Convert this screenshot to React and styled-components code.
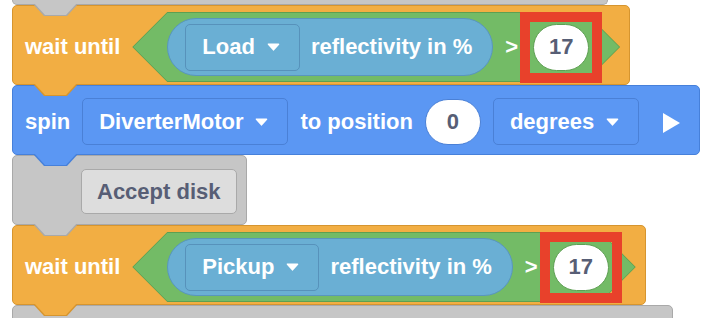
import React from "react";
import styled, { createGlobalStyle } from "styled-components";

const GlobalStyle = createGlobalStyle`
  html, body {
    margin: 0;
    background: #ffffff;
    overflow: hidden;
  }
  body {
    font-family: "Liberation Sans", Arial, sans-serif;
  }
`;

// block colours
const palette = {
  control: { fill: "#f2ae43", line: "#d6952f" },
  motion: { fill: "#5b97f3", line: "#4680da" },
  note: { fill: "#c6c6c6", line: "#a9a9a9" },
};

const Canvas = styled.div`
  display: flex;
  flex-direction: column;
  align-items: flex-start;
  padding-left: 12px;
  height: 318px;
  overflow: hidden;
`;

const Block = styled.div`
  position: relative;
  flex-shrink: 0;
  display: flex;
  align-items: center;
  gap: 12px;
  box-sizing: border-box;
  height: ${(p) => p.$h}px;
  width: ${(p) => (p.$w ? `${p.$w}px` : "auto")};
  padding: ${(p) => p.$pt ?? 3}px ${(p) => p.$pr ?? 19}px 0 ${(p) => p.$pl ?? 12}px;
  background: ${(p) => palette[p.$kind].fill};
  border: 1px solid ${(p) => palette[p.$kind].line};
  border-radius: ${(p) => (p.$stub ? "0 0 5px 5px" : "5px")};
  border-top-width: ${(p) => (p.$stub ? 0 : 1)}px;

  /* connector tab that pokes into the next block */
  &::before,
  &::after {
    content: "";
    position: absolute;
    z-index: 3;
    height: 12px;
    clip-path: polygon(0 0, 100% 0, calc(100% - 11px) 100%, 11px 100%);
  }
  &::before {
    left: 20px;
    top: 100%;
    width: 45px;
    background: ${(p) => palette[p.$kind].line};
  }
  &::after {
    left: 21px;
    top: calc(100% - 1px);
    width: 43px;
    background: ${(p) => palette[p.$kind].fill};
  }
`;

const Label = styled.span`
  color: ${(p) => (p.$dark ? "#575e75" : "#ffffff")};
  font-size: 22px;
  font-weight: 700;
  line-height: 1;
  white-space: nowrap;
`;

const Hex = styled.div`
  position: relative;
  display: flex;
  align-items: center;
  gap: 12px;
  box-sizing: border-box;
  height: 70px;
  padding: 0 ${(p) => p.$pr}px 0 35px;

  &::before,
  &::after {
    content: "";
    position: absolute;
  }
  &::before {
    inset: 0;
    background: #5d9f52;
    clip-path: polygon(35px 0, calc(100% - 35px) 0, 100% 50%, calc(100% - 35px) 100%, 35px 100%, 0 50%);
  }
  &::after {
    inset: 1px;
    background: #73bb66;
    clip-path: polygon(34px 0, calc(100% - 34px) 0, 100% 50%, calc(100% - 34px) 100%, 34px 100%, 0 50%);
  }
  & > * {
    position: relative;
    z-index: 1;
  }
`;

const Reporter = styled.div`
  display: flex;
  align-items: center;
  gap: 11px;
  box-sizing: border-box;
  height: 58px;
  padding: 0 20px 0 17px;
  background: #6aafd4;
  border: 1px solid #5996bd;
  border-radius: 29px;
`;

const Dropdown = styled.div`
  display: flex;
  align-items: center;
  gap: 12px;
  box-sizing: border-box;
  height: 47px;
  padding: 0 19px 0 16px;
  border: 1px solid ${(p) => p.$line};
  border-radius: 5px;
`;

const NumberField = styled.div`
  display: flex;
  align-items: center;
  justify-content: center;
  box-sizing: border-box;
  height: ${(p) => p.$h ?? 47}px;
  min-width: 56px;
  padding: 0 14px;
  background: #ffffff;
  border: 1px solid ${(p) => p.$line};
  border-radius: 24px;
`;

const Highlight = styled.div`
  display: flex;
  align-items: center;
  justify-content: center;
  box-sizing: border-box;
  width: 82px;
  height: 71px;
  margin-left: -10px;
  border: 10px solid #e8412b;
`;

const Button = styled.div`
  display: flex;
  align-items: center;
  box-sizing: border-box;
  height: 45px;
  padding: 0 15px;
  background: #dddddd;
  border: 1px solid #a9a9a9;
  border-radius: 5px;
`;

const Caret = () => (
  <svg width="13" height="8" viewBox="0 0 13 8">
    <path d="M1.5 1.2 H11.5 L6.5 6.8 Z" fill="#fff" stroke="#fff" strokeWidth="1.6" strokeLinejoin="round" />
  </svg>
);

const PlayIcon = styled.svg`
  margin-left: 12px;
  margin-top: 2px;
`;

const Menu = ({ label, line }) => (
  <Dropdown $line={line}>
    <Label>{label}</Label>
    <Caret />
  </Dropdown>
);

const WaitUntil = ({ sensor, value, pr }) => (
  <Block $kind="control" $h={80} $pt={4} $pr={9}>
    <Label>wait until</Label>
    <Hex $pr={pr}>
      <Reporter>
        <Menu label={sensor} line="#5792bb" />
        <Label>reflectivity in %</Label>
      </Reporter>
      <Label>&gt;</Label>
      <Highlight>
        <NumberField $line="#5d9f52">
          <Label $dark>{value}</Label>
        </NumberField>
      </Highlight>
    </Hex>
  </Block>
);

export default function App() {
  return (
    <>
      <GlobalStyle />
      <Canvas>
        <Block $kind="note" $h={5} $w={596} $stub />
        <WaitUntil sensor="Load" value="17" pr={18} />
        <Block $kind="motion" $h={70} $pr={19}>
          <Label>spin</Label>
          <Menu label="DiverterMotor" line="#4a80d6" />
          <Label>to position</Label>
          <NumberField $line="#4a80d6" $h={46}>
            <Label $dark>0</Label>
          </NumberField>
          <Menu label="degrees" line="#4a80d6" />
          <PlayIcon width="17" height="20" viewBox="0 0 17 20">
            <polygon points="0,0 17,10 0,20" fill="#fff" />
          </PlayIcon>
        </Block>
        <Block $kind="note" $h={70} $pl={68} $pr={9}>
          <Button>
            <Label $dark>Accept disk</Label>
          </Button>
        </Block>
        <WaitUntil sensor="Pickup" value="17" pr={14} />
        <Block $kind="note" $h={30} $w={661} />
      </Canvas>
    </>
  );
}
